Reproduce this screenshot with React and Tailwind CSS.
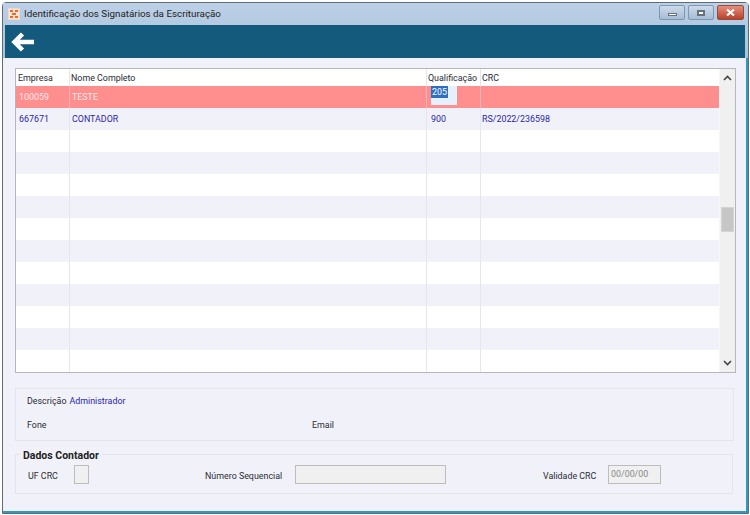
import React from 'react'

const font = { fontFamily: 'Roboto, sans-serif' }

const rows = [
  { empresa: '100059', nome: 'TESTE', qualificacao: '205', crc: '', selected: true },
  { empresa: '667671', nome: 'CONTADOR', qualificacao: '900', crc: 'RS/2022/236598' },
  ...Array.from({ length: 11 }, () => ({ empresa: '', nome: '', qualificacao: '', crc: '' })),
]

const WinButton = ({ className, children }) => (
  <div className={`h-[15px] flex items-center justify-center rounded-[2px] border ${className}`}>
    {children}
  </div>
)

const AppIcon = () => (
  <svg width="12" height="12" viewBox="0 0 12 12" className="shrink-0">
    <rect x="0.5" y="0.5" width="11" height="11" fill="#fbe6d6" stroke="#eed9c8" />
    <path d="M2 2h3v2H2zM7 2h3v2H7zM4 5h4v2H4zM2 8h3v2H2zM7 8h3v2H7z" fill="#f0682a" />
  </svg>
)

const Row = ({ row, index }) => {
  const bg = row.selected ? 'bg-[#ff8e8e]' : index % 2 === 1 ? 'bg-[#f1f2f9]' : 'bg-white'
  const text = row.selected ? 'text-[#ffe9e9]' : 'text-[#2a1fa8]'
  const line = row.selected ? 'border-[#ffb0b0]' : 'border-[#e6e6ea]'
  return (
    <div className={`h-[22px] flex ${bg} ${text}`}>
      <div className={`w-[54px] pl-[3px] pt-[5px] border-r ${line}`}>{row.empresa}</div>
      <div className={`w-[357px] pl-[2px] pt-[5px] border-r ${line}`}>{row.nome}</div>
      <div className={`w-[54px] pl-[4px] border-r ${line}`}>
        {row.selected ? (
          <div className="w-[26px] h-[19px] bg-[#e4f0fb] text-white relative">
            <span className="absolute left-0 top-0 bg-[#2f6fc0] px-px leading-[12px]">205</span>
          </div>
        ) : (
          <div className="pt-[5px]">{row.qualificacao}</div>
        )}
      </div>
      <div className="flex-1 pl-[1px] pt-[5px]">{row.crc}</div>
    </div>
  )
}

export default function App() {
  return (
    <div style={font} className="w-[750px] h-[515px] bg-white p-[2px] pr-[1px] pb-[1px] overflow-hidden text-[8.9px] text-[#2b2b33]">
      <div className="h-full flex flex-col border border-[#5f6b75] rounded-t-[4px] bg-[#f1f2f9]">
        {/* Frame: title bar and toolbar */}
        <div className="shrink-0 bg-gradient-to-b from-[#bcd0e6] to-[#a9c2dc]">
          <div className="h-[22px] flex items-center pl-[5px] pr-[4px]">
            <AppIcon />
            <span className="ml-[4px] text-[9.8px] text-[#1d1d1d]">Identificação dos Signatários da Escrituração</span>
            <div className="ml-auto flex gap-[3px] -mt-[3px]">
              <WinButton className="w-[26px] border-[#7f97b2] bg-gradient-to-b from-[#cddbea] to-[#a5bcd4]">
                <div className="w-[9px] h-[3px] mt-[3px] bg-white border border-[#66717d]" />
              </WinButton>
              <WinButton className="w-[26px] border-[#7f97b2] bg-gradient-to-b from-[#cddbea] to-[#a5bcd4]">
                <div className="w-[8px] h-[6px] bg-white border-2 border-[#66717d]" />
              </WinButton>
              <WinButton className="w-[27px] border-[#9a4a3a] bg-gradient-to-b from-[#e58e7c] to-[#b8402a]">
                <svg width="11" height="9" viewBox="0 0 11 9">
                  <path d="M2 1.5l7 6M9 1.5l-7 6" stroke="#fff" strokeWidth="2.2" />
                </svg>
              </WinButton>
            </div>
          </div>
          <div className="h-[33px] ml-[2px] mr-[3px] flex items-center pl-[6px] bg-[#135a7c]">
            <svg width="24" height="20" viewBox="0 0 24 20">
              <path d="M11.5 2L3.5 10l8 8M4 10h19" fill="none" stroke="#fff" strokeWidth="4.5" />
            </svg>
          </div>
        </div>

        <div className="flex-1 flex flex-col pl-[12px] pr-[10px] pt-[10px] border-r-2 border-b-2 border-[#2b9cc0]">
          {/* Grid */}
          <div className="h-[305px] shrink-0 flex bg-white border border-[#b5b7bb]">
            <div className="flex-1 flex flex-col min-w-0">
              <div className="h-[17px] shrink-0 flex items-center">
                <div className="w-[54px] pl-[2px] pt-[2px] border-r border-[#e6e6ea] h-full flex items-center">Empresa</div>
                <div className="w-[357px] pl-[1px] pt-[2px] border-r border-[#e6e6ea] h-full flex items-center">Nome Completo</div>
                <div className="w-[54px] pl-[1px] pt-[2px] border-r border-[#e6e6ea] h-full flex items-center whitespace-nowrap">Qualificação</div>
                <div className="flex-1 pl-[1px] pt-[2px] h-full flex items-center">CRC</div>
              </div>
              {rows.map((row, i) => (
                <Row key={i} row={row} index={i} />
              ))}
            </div>
            {/* Scrollbar */}
            <div className="w-[16px] shrink-0 flex flex-col items-center bg-[#f0f0f0] border-l border-[#f7f7f7]">
              <svg width="9" height="6" viewBox="0 0 9 6" className="mt-[6px]">
                <path d="M1 5l3.5-3.5L8 5" fill="none" stroke="#444" strokeWidth="1.6" />
              </svg>
              <div className="w-[13px] h-[25px] mt-[126px] bg-[#c6c6c6] border border-[#d4d4d4]" />
              <svg width="9" height="6" viewBox="0 0 9 6" className="mt-auto mb-[6px]">
                <path d="M1 1l3.5 3.5L8 1" fill="none" stroke="#444" strokeWidth="1.6" />
              </svg>
            </div>
          </div>

          {/* Descricao */}
          <div className="mt-[15px] h-[53px] shrink-0 border border-[#e4e5ea] pl-[11px] pt-[5px] mr-[2px]">
            <div className="h-[16px] flex items-center">
              Descrição
              <span className="ml-[3px] text-[#2a1fa8]">Administrador</span>
            </div>
            <div className="mt-[8px] h-[16px] flex items-center">
              <span className="w-[285px]">Fone</span>
              <span>Email</span>
            </div>
          </div>

          {/* Dados Contador */}
          <div className="mt-[13px] h-[40px] shrink-0 relative border border-[#e4e5ea] flex items-center pl-[12px] mr-[3px]">
            <span className="absolute left-[4px] -top-[6px] px-[3px] bg-[#f1f2f9] text-[10.5px] font-bold text-[#222] leading-[13px]">Dados Contador</span>
            <span className="w-[46px] pt-[5px]">UF CRC</span>
            <div className="w-[15px] h-[19px] bg-[#f0f0f0] border border-[#bdbdbd]" />
            <span className="ml-[116px] w-[90px] pt-[5px]">Número Sequencial</span>
            <div className="w-[151px] h-[19px] bg-[#f0f0f0] border border-[#bdbdbd]" />
            <span className="ml-[97px] w-[65px] pt-[5px]">Validade CRC</span>
            <div className="w-[53px] h-[19px] bg-[#f0f0f0] border border-[#bdbdbd] pl-[2px] pt-[2px] flex items-center text-[#888]">00/00/00</div>
          </div>
        </div>
      </div>
    </div>
  )
}
